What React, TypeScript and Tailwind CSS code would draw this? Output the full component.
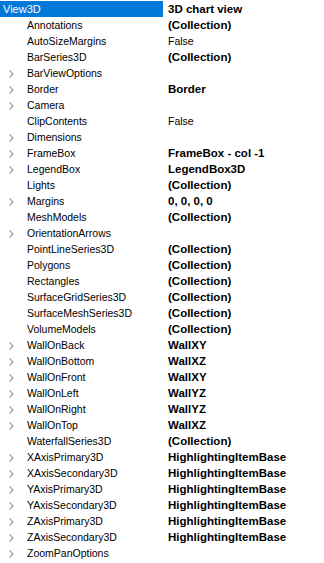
import React from "react";

type Row = { name: string; value?: string; bold?: boolean; exp?: boolean };

const rows: Row[] = [
  { name: "Annotations", value: "(Collection)", bold: true },
  { name: "AutoSizeMargins", value: "False" },
  { name: "BarSeries3D", value: "(Collection)", bold: true },
  { name: "BarViewOptions", exp: true },
  { name: "Border", value: "Border", bold: true, exp: true },
  { name: "Camera", exp: true },
  { name: "ClipContents", value: "False" },
  { name: "Dimensions", exp: true },
  { name: "FrameBox", value: "FrameBox - col -1", bold: true, exp: true },
  { name: "LegendBox", value: "LegendBox3D", bold: true, exp: true },
  { name: "Lights", value: "(Collection)", bold: true },
  { name: "Margins", value: "0, 0, 0, 0", bold: true, exp: true },
  { name: "MeshModels", value: "(Collection)", bold: true },
  { name: "OrientationArrows", exp: true },
  { name: "PointLineSeries3D", value: "(Collection)", bold: true },
  { name: "Polygons", value: "(Collection)", bold: true },
  { name: "Rectangles", value: "(Collection)", bold: true },
  { name: "SurfaceGridSeries3D", value: "(Collection)", bold: true },
  { name: "SurfaceMeshSeries3D", value: "(Collection)", bold: true },
  { name: "VolumeModels", value: "(Collection)", bold: true },
  { name: "WallOnBack", value: "WallXY", bold: true, exp: true },
  { name: "WallOnBottom", value: "WallXZ", bold: true, exp: true },
  { name: "WallOnFront", value: "WallXY", bold: true, exp: true },
  { name: "WallOnLeft", value: "WallYZ", bold: true, exp: true },
  { name: "WallOnRight", value: "WallYZ", bold: true, exp: true },
  { name: "WallOnTop", value: "WallXZ", bold: true, exp: true },
  { name: "WaterfallSeries3D", value: "(Collection)", bold: true },
  { name: "XAxisPrimary3D", value: "HighlightingItemBase", bold: true, exp: true },
  { name: "XAxisSecondary3D", value: "HighlightingItemBase", bold: true, exp: true },
  { name: "YAxisPrimary3D", value: "HighlightingItemBase", bold: true, exp: true },
  { name: "YAxisSecondary3D", value: "HighlightingItemBase", bold: true, exp: true },
  { name: "ZAxisPrimary3D", value: "HighlightingItemBase", bold: true, exp: true },
  { name: "ZAxisSecondary3D", value: "HighlightingItemBase", bold: true, exp: true },
  { name: "ZoomPanOptions", exp: true },
];

function Chevron() {
  return (
    <svg width="5" height="8" viewBox="0 0 5 8" className="block">
      <path d="M0.5 0.5 L4 4 L0.5 7.5" fill="none" stroke="#a6a6a6" strokeWidth="1.3" />
    </svg>
  );
}

export default function App() {
  return (
    <div
      className="w-[324px] h-[563px] bg-white text-black text-[10.5px] leading-none overflow-hidden pt-[1px]"
      style={{ fontFamily: '"Liberation Sans", Arial, sans-serif' }}
    >
      <div className="flex h-[16px] items-center">
        <div className="w-[163px] h-[16px] bg-[#0078d7] text-white flex items-center pl-[3px] pt-[1px] text-[11px]">View3D</div>
        <div className="pl-[5px] pt-[1px] font-bold text-[11.5px]">3D chart view</div>
      </div>
      {rows.map((r) => (
        <div key={r.name} className="flex h-[16px] items-center pt-[1px]">
          <div className="w-[163px] flex items-center">
            <div className="w-[27px] flex items-center pl-[9px]">{r.exp ? <Chevron /> : null}</div>
            <div className="whitespace-nowrap">{r.name}</div>
          </div>
          {r.value ? (
            <div className={"pl-[5px] whitespace-nowrap " + (r.bold ? "font-bold text-[11.5px]" : "text-[10.5px]")}>{r.value}</div>
          ) : null}
        </div>
      ))}
    </div>
  );
}
